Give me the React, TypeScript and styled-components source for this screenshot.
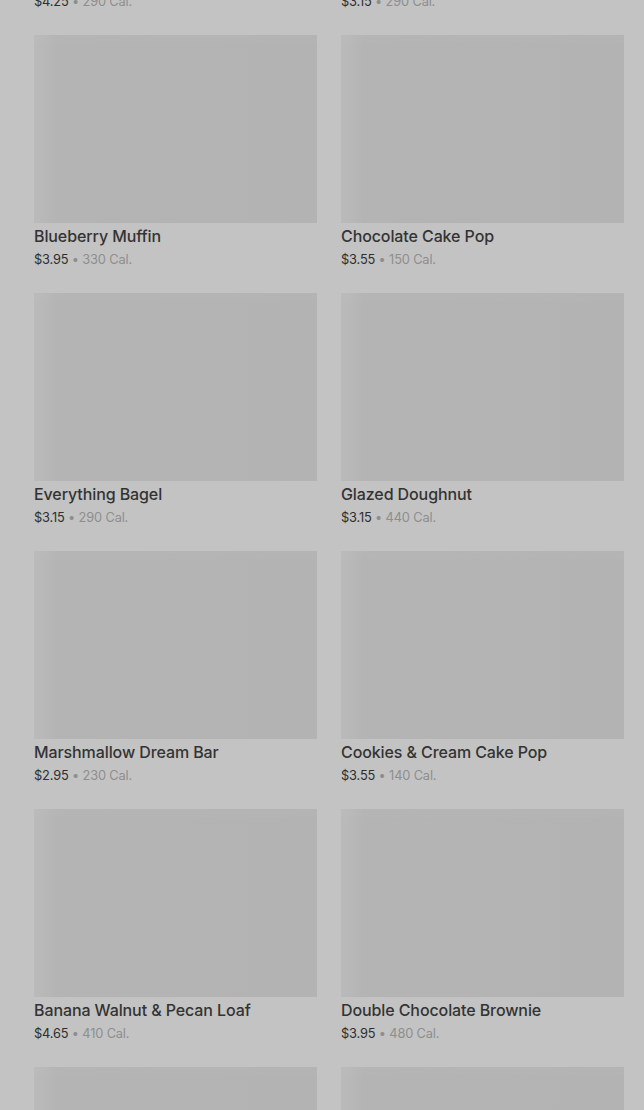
import React from 'react';
import styled, { createGlobalStyle } from 'styled-components';

interface Item {
  name: string;
  price: string;
  cal: number;
}

// the list is scrolled: the first row sits mostly above the window
const ITEMS: Item[] = [
  { name: 'Butter Croissant', price: '$4.25', cal: 290 },
  { name: 'Cheese Danish', price: '$3.15', cal: 290 },
  { name: 'Blueberry Muffin', price: '$3.95', cal: 330 },
  { name: 'Chocolate Cake Pop', price: '$3.55', cal: 150 },
  { name: 'Everything Bagel', price: '$3.15', cal: 290 },
  { name: 'Glazed Doughnut', price: '$3.15', cal: 440 },
  { name: 'Marshmallow Dream Bar', price: '$2.95', cal: 230 },
  { name: 'Cookies & Cream Cake Pop', price: '$3.55', cal: 140 },
  { name: 'Banana Walnut & Pecan Loaf', price: '$4.65', cal: 410 },
  { name: 'Double Chocolate Brownie', price: '$3.95', cal: 480 },
  { name: 'Plain Bagel', price: '$2.95', cal: 280 },
  { name: 'Lemon Loaf', price: '$3.75', cal: 470 },
];

const GlobalStyle = createGlobalStyle`
  html, body {
    margin: 0;
    padding: 0;
    background: #c3c3c3;
    overflow: hidden;
  }
  body {
    font-family: Inter, "Liberation Sans", Arial, sans-serif;
    -webkit-font-smoothing: antialiased;
  }
`;

const Page = styled.div`
  height: 1110px;
  overflow: hidden;
`;

const Grid = styled.div`
  display: grid;
  grid-template-columns: repeat(2, 283px);
  column-gap: 24px;
  row-gap: 24px;
  padding: 0 20px 0 34px;
  margin-top: -223px;
`;

const Card = styled.div`
  display: flex;
  flex-direction: column;
`;

const Thumb = styled.div`
  height: 188px;
  background:
    linear-gradient(180deg, rgba(255, 255, 255, 0.02) 0, rgba(255, 255, 255, 0.02) 8px, transparent 8px),
    linear-gradient(90deg, #bababa 0, #b8b8b8 10px, #b4b4b4 22px, #b3b3b3 100%);
`;

const Name = styled.div`
  margin-top: 3px;
  font-size: 16px;
  line-height: 20px;
  font-weight: 500;
  letter-spacing: -0.1px;
  color: #333333;
  white-space: nowrap;
`;

const Meta = styled.div`
  margin-top: 5px;
  font-size: 12.8px;
  line-height: 18px;
  letter-spacing: -0.15px;
  color: #2e2e2e;
  white-space: nowrap;
`;

const Cal = styled.span`
  color: #8e8e8e;
`;

const App: React.FC = () => (
  <Page>
    <GlobalStyle />
    <Grid>
      {ITEMS.map((item) => (
        <Card key={item.name}>
          <Thumb />
          <Name>{item.name}</Name>
          <Meta>
            {item.price} <Cal>• {item.cal} Cal.</Cal>
          </Meta>
        </Card>
      ))}
    </Grid>
  </Page>
);

export default App;
